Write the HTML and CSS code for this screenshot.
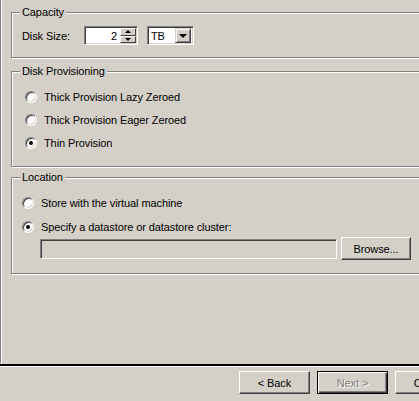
FILE: index.html
```html
<!DOCTYPE html>
<html>
<head>
<meta charset="utf-8">
<link rel="stylesheet" href="styles.css">
</head>
<body>
<div class="panel">
  <div class="group g-cap">
    <span class="gtitle">Capacity</span>
    <div class="size-row">
      <span class="lbl">Disk Size:</span>
      <div class="spin">
        <span class="spin-val">2</span>
        <div class="spin-btns">
          <span class="sbtn"><span class="tri-up"></span></span>
          <span class="sbtn"><span class="tri-down"></span></span>
        </div>
      </div>
      <div class="combo">
        <span class="combo-val">TB</span>
        <span class="combo-btn"><span class="tri-down big"></span></span>
      </div>
    </div>
  </div>

  <div class="group g-prov">
    <span class="gtitle">Disk Provisioning</span>
    <div class="opt"><span class="radio"></span><span>Thick Provision Lazy Zeroed</span></div>
    <div class="opt"><span class="radio"></span><span>Thick Provision Eager Zeroed</span></div>
    <div class="opt"><span class="radio on"></span><span>Thin Provision</span></div>
  </div>

  <div class="group g-loc">
    <span class="gtitle">Location</span>
    <div class="opt"><span class="radio"></span><span>Store with the virtual machine</span></div>
    <div class="opt short"><span class="radio on"></span><span>Specify a datastore or datastore cluster:</span></div>
    <div class="path-row">
      <div class="field"></div>
      <button class="btn browse">Browse...</button>
    </div>
  </div>
</div>
<div class="sep"></div>
<div class="footer">
  <button class="btn">&lt; Back</button>
  <button class="btn default disabled">Next &gt;</button>
  <button class="btn">Cancel</button>
</div>
</body>
</html>
```

FILE: styles.css
```css
html, body {
  margin: 0;
  padding: 0;
}
body {
  width: 419px;
  height: 401px;
  overflow: hidden;
  background: #d4d0c8;
  font-family: "Liberation Sans", Arial, sans-serif;
  font-size: 11px;
  letter-spacing: -0.1px;
  color: #000;
}
.panel {
  height: 363px;
  box-sizing: border-box;
  border-left: 1px solid #808080;
  box-shadow: inset 1px 0 #fff;
  padding: 12px 0 0 10px;
  display: flex;
  flex-direction: column;
}
.group {
  position: relative;
  border: 1px solid #808080;
  box-shadow: inset 1px 1px #fff, 1px 1px #fff;
  margin-right: -30px;
}
.gtitle {
  position: absolute;
  top: -7px;
  left: 8px;
  padding: 0 2px;
  line-height: 13px;
  background: #d4d0c8;
}
.g-cap {
  padding: 13px 0 12px 10px;
}
.g-prov {
  margin-top: 13px;
  padding: 13px 0 12px 13px;
}
.g-loc {
  margin-top: 10px;
  padding: 13px 0 13px 10px;
}
.size-row {
  display: flex;
  align-items: center;
  height: 19px;
}
.lbl {
  width: 62px;
}
.spin {
  width: 54px;
  height: 19px;
  box-sizing: border-box;
  background: #fff;
  border: 1px solid;
  border-color: #808080 #fff #fff #808080;
  box-shadow: inset 1px 1px #404040, inset -1px -1px #d4d0c8;
  display: flex;
  align-items: center;
  padding: 1px 1px 1px 2px;
}
.spin-val {
  flex: 1;
  text-align: right;
  padding-right: 3px;
}
.spin-btns {
  width: 16px;
  height: 15px;
  display: flex;
  flex-direction: column;
}
.sbtn {
  flex: 1;
  box-sizing: border-box;
  border: 1px solid;
  border-color: #fff #404040 #404040 #fff;
  background: #d4d0c8;
  display: flex;
  align-items: center;
  justify-content: center;
}
.tri-up {
  width: 0;
  height: 0;
  border-left: 3px solid transparent;
  border-right: 3px solid transparent;
  border-bottom: 3px solid #000;
}
.tri-down {
  width: 0;
  height: 0;
  border-left: 3px solid transparent;
  border-right: 3px solid transparent;
  border-top: 3px solid #000;
}
.tri-down.big {
  border-left-width: 4px;
  border-right-width: 4px;
  border-top-width: 4px;
}
.combo {
  margin-left: 9px;
  width: 47px;
  height: 19px;
  box-sizing: border-box;
  background: #fff;
  border: 1px solid;
  border-color: #808080 #fff #fff #808080;
  box-shadow: inset 1px 1px #404040, inset -1px -1px #d4d0c8;
  display: flex;
  align-items: center;
  padding: 2px 2px 2px 3px;
}
.combo-val {
  flex: 1;
}
.combo-btn {
  width: 16px;
  height: 15px;
  box-sizing: border-box;
  border: 1px solid;
  border-color: #d4d0c8 #404040 #404040 #d4d0c8;
  box-shadow: inset 1px 1px #fff, inset -1px -1px #808080;
  background: #d4d0c8;
  display: flex;
  align-items: center;
  justify-content: center;
}
.opt {
  display: flex;
  align-items: center;
  height: 23px;
}
.g-loc .opt {
  height: 24px;
}
.g-loc .opt.short {
  height: 22px;
  align-items: flex-start;
  padding-top: 6px;
  box-sizing: border-box;
}
.radio {
  position: relative;
  width: 12px;
  height: 12px;
  box-sizing: border-box;
  border-radius: 50%;
  background: #fff;
  border: 1px solid;
  border-color: #808080 #fff #fff #808080;
  box-shadow: inset 1px 1px #404040, inset -1px -1px #d4d0c8;
  margin-right: 7px;
  flex: none;
}
.radio.on::after {
  content: "";
  position: absolute;
  left: 3px;
  top: 3px;
  width: 4px;
  height: 4px;
  border-radius: 50%;
  background: #000;
}
.path-row {
  display: flex;
  align-items: center;
  height: 23px;
}
.field {
  margin-left: 18px;
  width: 297px;
  height: 20px;
  box-sizing: border-box;
  border: 1px solid;
  border-color: #808080 #fff #fff #808080;
  box-shadow: inset 1px 1px #404040, inset -1px -1px #d4d0c8;
  background: #d4d0c8;
}
.btn {
  font-family: inherit;
  font-size: 11px;
  letter-spacing: -0.1px;
  color: #000;
  background: #d4d0c8;
  width: 71px;
  height: 23px;
  box-sizing: border-box;
  padding: 0;
  margin: 0;
  border: 1px solid;
  border-color: #fff #404040 #404040 #fff;
  box-shadow: inset -1px -1px #808080, inset 1px 1px #d4d0c8;
  border-radius: 0;
  flex: none;
}
.browse {
  margin-left: 4px;
  width: 70px;
}
.btn.default {
  border: 1px solid #000;
  box-shadow: inset 1px 1px #fff, inset -1px -1px #404040, inset -2px -2px #808080;
}
.btn.disabled {
  color: #808080;
  text-shadow: 1px 1px #fff;
}
.sep {
  margin-top: 1px;
  height: 2px;
  background: #000;
  border-bottom: 1px solid #fff;
}
.footer {
  display: flex;
  gap: 7px;
  padding: 4px 0 0 239px;
}
```
